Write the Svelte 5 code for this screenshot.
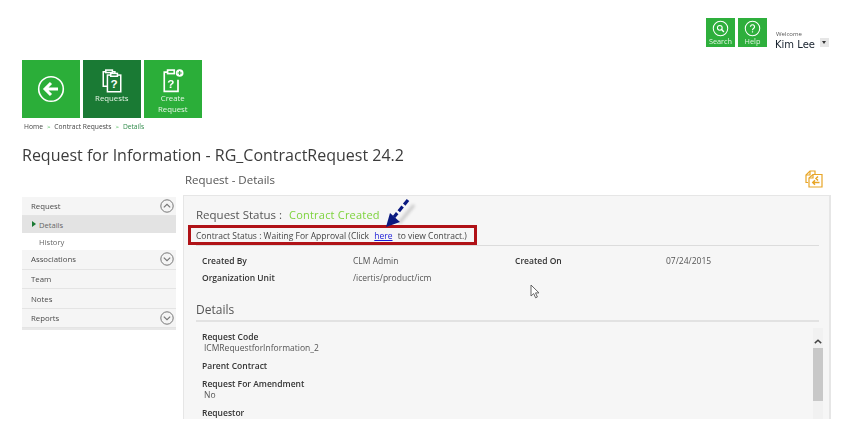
<script lang="ts">
  const nav = [
    { label: "Request", toggle: "up" },
    { label: "Details", sub: true, current: true },
    { label: "History", sub: true },
    { label: "Associations", toggle: "down" },
    { label: "Team" },
    { label: "Notes" },
    { label: "Reports", toggle: "down" },
  ];
  const crumbs = ["Home", "Contract Requests"];
</script>

<div class="page">
  <header class="top">
    <a class="mini">
      <svg viewBox="0 0 20 20" width="17" height="17" fill="none" stroke="#fff">
        <circle cx="10" cy="10" r="8.5" stroke-width="1.2" />
        <circle cx="9.2" cy="9.2" r="2.8" stroke-width="1.3" />
        <path d="M11.3 11.3l2.7 2.7" stroke-width="1.6" />
      </svg>
      <span>Search</span>
    </a>
    <a class="mini">
      <svg viewBox="0 0 20 20" width="17" height="17" fill="none" stroke="#fff">
        <circle cx="10" cy="10" r="8.5" stroke-width="1.2" />
        <path d="M7.6 8a2.4 2.4 0 1 1 3.6 2.1c-.8.5-1.2.9-1.2 1.9M10 13.3v1.4" stroke-width="1.4" />
      </svg>
      <span>Help</span>
    </a>
    <div class="user">
      <small>Welcome</small>
      <b>Kim Lee</b>
    </div>
    <span class="caret"></span>
  </header>

  <nav class="tiles">
    <a class="tile back">
      <svg viewBox="0 0 28 28" width="28" height="28" fill="none" stroke="#fff">
        <circle cx="14" cy="14" r="12.3" stroke-width="1.6" />
        <path d="M21 14H9M14 8l-6 6 6 6" stroke-width="3" />
      </svg>
    </a>
    <a class="tile active">
      <svg viewBox="0 0 28 30" width="24" height="25" fill="none" stroke="#fff" stroke-width="1.8">
        <path d="M8 22H3.5V4.5H7M14 4.5h3.5V7" />
        <rect x="6.5" y="2.5" width="8" height="3" />
        <rect x="8.5" y="8.5" width="16" height="20" fill="#1a7a34" />
        <rect x="12.5" y="6.5" width="8" height="3.4" fill="#1a7a34" />
        <text x="16.5" y="24" class="q">?</text>
      </svg>
      <span>Requests</span>
    </a>
    <a class="tile">
      <svg viewBox="0 0 28 30" width="24" height="25" fill="none" stroke="#fff" stroke-width="2">
        <path d="M8 5H3.5v23h16.5V14" />
        <rect x="7.5" y="2.5" width="8" height="4.2" />
        <text x="11.5" y="24" class="q">?</text>
        <circle cx="22" cy="6" r="4.6" fill="#fff" stroke="none" />
        <path d="M22 3.5v5M19.5 6h5" stroke="#2bae39" stroke-width="1.3" />
      </svg>
      <span>Create<br />Request</span>
    </a>
  </nav>

  <div class="crumbs">
    {#each crumbs as crumb}
      <span>{crumb}</span><i>&gt;</i>
    {/each}
    <em>Details</em>
  </div>

  <h1>Request for Information - RG_ContractRequest 24.2</h1>

  <div class="layout">
    <aside class="side">
      {#each nav as item}
        <div class="row" class:sub={item.sub} class:current={item.current}>
          <span>{item.label}</span>
          {#if item.toggle}
            <svg viewBox="0 0 14 14" width="14" height="14" fill="none" stroke="#777">
              <circle cx="7" cy="7" r="6.2" />
              <path d={item.toggle === "up" ? "M3.8 8.4L7 5.4l3.2 3" : "M3.8 5.6L7 8.6l3.2-3"} stroke-width="1.2" />
            </svg>
          {/if}
        </div>
      {/each}
    </aside>

    <section class="main">
      <div class="main-head">
        <h2>Request - Details</h2>
        <svg viewBox="0 0 18 18" width="18" height="18" fill="none" stroke="#e8a526" stroke-width="1.2">
          <path d="M3 12.5H1V5l4-4h5v3" />
          <path d="M5 1v4H1" />
          <path d="M8 4.500h9V17H4V8z" fill="#fff" />
          <path d="M8 4.500V8H4" />
          <path d="M14.500 12.500H8M10 10.300l-2.200 2.200 2.200 2.200M13 6.500l-2 2 2 2" stroke-width="1.500" />
        </svg>
      </div>

      <div class="panel">
        <div class="status">
          <span class="status-label">Request Status :</span>
          <span class="status-value">Contract Created</span>
        </div>
        <div class="contract">
          Contract Status : Waiting For Approval (Click <a href="#here">here</a> to view Contract.)
        </div>

        <div class="facts">
          <b>Created By</b><span>CLM Admin</span><b>Created On</b><span>07/24/2015</span>
          <b>Organization Unit</b><span>/icertis/product/icm</span>
        </div>

        <h3>Details</h3>

        <dl>
          <dt>Request Code</dt>
          <dd>ICMRequestforInformation_2</dd>
          <dt>Parent Contract</dt>
          <dt>Request For Amendment</dt>
          <dd>No</dd>
          <dt>Requestor</dt>
        </dl>

        <div class="scrollbar">
          <svg viewBox="0 0 10 6" width="8" height="5" fill="none" stroke="#444" stroke-width="1.800">
            <path d="M1 5l4-3.500L9 5" />
          </svg>
          <div class="thumb"></div>
        </div>

        <div class="callout"></div>
        <svg class="arrow" viewBox="0 0 40 40" width="40" height="40" fill="none">
          <path class="shade" d="M29 5L14 23" stroke="#777" stroke-width="3" />
          <path d="M27 2L13 19" stroke="#0b1a80" stroke-width="3.200" stroke-dasharray="6 2.500" />
          <path d="M5 29l4-14 10 9z" fill="#0b1a80" />
        </svg>
        <svg class="cursor" viewBox="0 0 10 15" width="10" height="15">
          <path d="M1 1v11l2.700-2.400 1.900 4.200 1.800-.8-1.900-4.100H9z" fill="#fff" stroke="#555" stroke-width=".9" />
        </svg>
      </div>
    </section>
  </div>
</div>

<style>
  :global(body) {
    margin: 0;
    background: #fff;
  }
  .page {
    position: relative;
    width: 850px;
    height: 438px;
    overflow: hidden;
    color: #444;
    font-family: "Open Sans", "Noto Sans", sans-serif;
    filter: blur(0.35px);
  }
  a {
    text-decoration: none;
  }
  .top {
    display: flex;
    align-items: flex-start;
    height: 60px;
    box-sizing: border-box;
    padding: 18px 0 0 706px;
  }
  .mini {
    display: flex;
    flex-direction: column;
    align-items: center;
    width: 29px;
    height: 29px;
    margin-right: 3px;
    padding-top: 2px;
    box-sizing: border-box;
    color: #e4f5e4;
    background: #2eaf3c;
    font-size: 7.300px;
    line-height: 8px;
  }
  .mini svg {
    flex: none;
  }
  .user {
    display: flex;
    flex-direction: column;
    margin: 13px 0 0 5px;
    width: 45px;
  }
  .user small {
    font-size: 6px;
    line-height: 7px;
    color: #555;
    padding-left: 1px;
  }
  .user b {
    margin-top: 1px;
    font-weight: 400;
    font-family: "DejaVu Sans", sans-serif;
    font-size: 10px;
    line-height: 12px;
    color: #16202c;
    white-space: nowrap;
  }
  .caret {
    position: relative;
    width: 9px;
    height: 9px;
    margin-top: 20px;
    background: #e6e6e6;
  }
  .caret::after {
    content: "";
    position: absolute;
    left: 2px;
    top: 3px;
    border: 2.5px solid transparent;
    border-top: 3px solid #333;
    border-bottom: 0;
  }
  .tiles {
    display: flex;
    gap: 3.500px;
    margin-left: 22px;
  }
  .tile {
    display: flex;
    flex-direction: column;
    align-items: center;
    width: 57.500px;
    height: 57.500px;
    padding-top: 8px;
    box-sizing: border-box;
    color: #e6f5e6;
    background: #2bae39;
    font-size: 7.800px;
    line-height: 10.500px;
    text-align: center;
  }
  .tile.back {
    justify-content: center;
    padding-top: 0;
  }
  .tile.active {
    background: #1a7a34;
  }
  .tile svg {
    flex: none;
  }
  .q {
    fill: #fff;
    stroke: none;
    font: 700 14px "Liberation Sans", sans-serif;
    text-anchor: middle;
  }
  .crumbs {
    display: flex;
    margin: 4px 0 0 24px;
    font-size: 6.700px;
    line-height: 10px;
    color: #444;
  }
  .crumbs i {
    font-style: normal;
    font-size: 6px;
    margin: 0 4px;
    color: #2bae39;
  }
  .crumbs em {
    font-style: normal;
    color: #2f8a4a;
  }
  h1 {
    margin: 11px 0 0 22px;
    font-size: 16px;
    line-height: 24px;
    font-weight: 400;
    color: #3c3c3c;
    white-space: nowrap;
  }
  .layout {
    display: grid;
    grid-template-columns: 154px 648px;
    gap: 7px;
    margin: 0 0 0 22px;
  }
  .side {
    align-self: start;
    margin-top: 30px;
    background: #f5f5f5;
    border-bottom: 2px solid #e8e8e8;
  }
  .row {
    display: flex;
    align-items: center;
    justify-content: space-between;
    height: 18.600px;
    padding: 0 2px 0 9px;
    border-bottom: 1px solid #e4e4e4;
    font-size: 7.800px;
    color: #4a4a4a;
  }
  .row.sub {
    height: 17px;
    border: 0;
    padding-left: 17px;
    font-size: 7.600px;
    color: #666;
    background: #fff;
  }
  .row.current {
    position: relative;
    background: #e3e3e3;
  }
  .row.current::before {
    content: "";
    position: absolute;
    left: 10px;
    top: 5px;
    border: 3.500px solid transparent;
    border-left: 4px solid #1a7a34;
    border-right: 0;
  }
  .main-head {
    display: flex;
    align-items: center;
    justify-content: space-between;
    height: 28px;
    box-sizing: border-box;
    padding: 0 8px 3px 2px;
  }
  h2 {
    margin: 0;
    font-size: 11.500px;
    font-weight: 400;
    color: #555;
  }
  .panel {
    position: relative;
    height: 224px;
    box-sizing: border-box;
    padding: 11px 10px 0 12px;
    overflow: hidden;
    background: #f6f6f6;
    border: solid #e6e6e6;
    border-width: 1px 2px 0 1px;
  }
  .status {
    display: flex;
    align-items: baseline;
    gap: 7px;
    height: 18px;
  }
  .status-label {
    font-size: 11.500px;
    color: #555;
  }
  .status-value {
    font-size: 11px;
    letter-spacing: 0.2px;
    color: #7dd33c;
  }
  .contract {
    height: 19px;
    margin-top: 1px;
    font-size: 8.500px;
    line-height: 19px;
    color: #444;
    white-space: nowrap;
    border-bottom: 1px solid #dcdcdc;
  }
  .contract a {
    margin: 0 3px;
    color: #1a1ad6;
    text-decoration: underline;
  }
  .facts {
    display: grid;
    grid-template-columns: 151px 162px 151px 1fr;
    grid-auto-rows: 17px;
    align-items: center;
    margin: 6px 0 0 6px;
    font-size: 8.500px;
    color: #555;
  }
  .facts b {
    font-weight: 600;
    color: #333;
  }
  h3 {
    margin: 12px 0 0;
    height: 24px;
    font-size: 12px;
    line-height: 23px;
    font-weight: 400;
    color: #555;
    border-bottom: 2px solid #e2e2e2;
    box-sizing: border-box;
  }
  dl {
    margin: 9px 0 0 6px;
    font-size: 8.500px;
    line-height: 11px;
  }
  dt {
    margin-top: 7px;
    font-weight: 600;
    color: #333;
  }
  dt:first-child {
    margin-top: 0;
  }
  dd {
    margin: 0 0 0 2px;
    color: #555;
  }
  .scrollbar {
    position: absolute;
    right: 6px;
    bottom: 0;
    display: flex;
    flex-direction: column;
    align-items: center;
    width: 10px;
    height: 91px;
    padding-top: 11px;
    box-sizing: border-box;
    background: #f1f1f1;
  }
  .thumb {
    flex: none;
    width: 10px;
    height: 53px;
    margin-top: 4px;
    background: #c8c8c8;
  }
  .callout {
    position: absolute;
    left: 4px;
    top: 29px;
    width: 283px;
    height: 14px;
    border: 3px solid #b01217;
  }
  .arrow {
    position: absolute;
    left: 197px;
    top: 2px;
  }
  .shade {
    opacity: 0.35;
    filter: blur(1.5px);
    transform: translate(4px, 2px);
  }
  .cursor {
    position: absolute;
    left: 346px;
    top: 88px;
  }
</style>
